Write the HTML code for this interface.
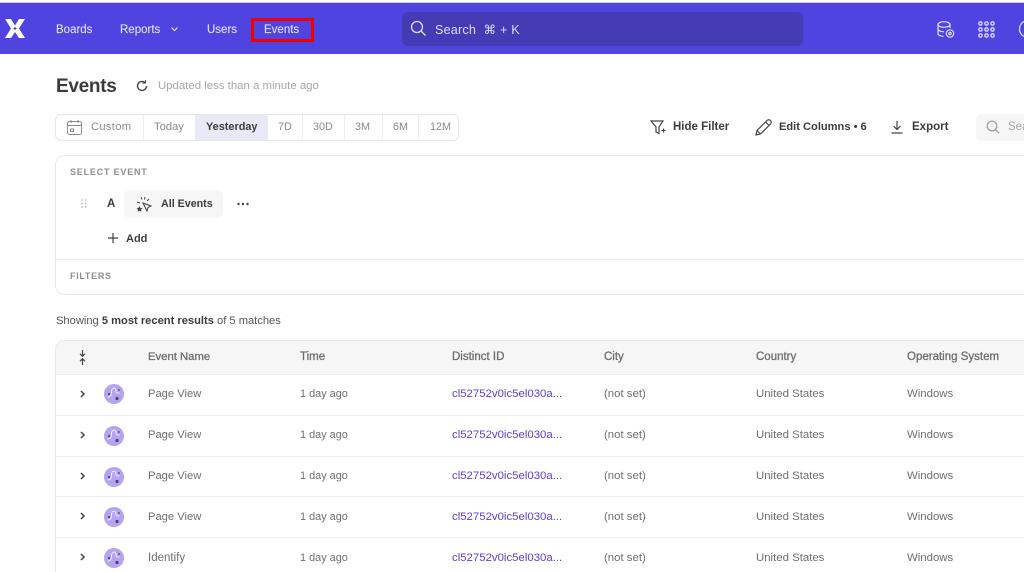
<!DOCTYPE html>
<html><head><meta charset="utf-8"><style>
html,body{margin:0;padding:0;background:#fff;width:1024px;height:572px;overflow:hidden}
body{position:relative;font-family:"Liberation Sans",sans-serif;color:#6b6b6b;filter:blur(.3px)}
.t{position:absolute;white-space:nowrap;font-size:11.5px;line-height:14px}
.a{position:absolute}
svg{position:absolute;overflow:visible}
.nav{color:#dedbf9;font-size:11.5px;-webkit-text-stroke:.15px #dedbf9}
.d{color:#8a8a8a;font-size:11.2px}
.b{color:#3d3d3d;font-size:11.5px;font-weight:bold}
.h{color:#6e6e6e;font-size:11.5px;-webkit-text-stroke:.3px #6e6e6e}
.c{color:#6f6f6f;font-size:11.4px}
.n{font-size:11.2px}
.y{font-size:10.900px}
.l{color:#5b3fd6}
.line{position:absolute;background:#ececec}
</style></head><body>
<div class="a" style="left:0;top:2px;width:1024px;height:1px;background:#ccc"></div>
<div class="a" style="left:0;top:3px;width:1024px;height:51px;background:#4f44e0"></div>
<svg style="left:5px;top:19px" width="20" height="20" viewBox="0 0 20 20"><path fill="#fff" d="M0 0h6L10 6.500 14 0h6l-6 9.500 6 9.500h-6L10 13 6 19H0l6-9.500z"/><path fill="#4f44e0" d="M10 8l2 1.500-2 1.500-2-1.500z"/></svg>
<div class="t nav" style="left:56px;top:23px">Boards</div>
<div class="t nav" style="left:120px;top:23px">Reports</div>
<svg style="left:170px;top:26px" width="9" height="6"><path d="M1.500 1.500L4.500 4.500 7.500 1.500" fill="none" stroke="#dedbf9" stroke-width="1.200"/></svg>
<div class="t nav" style="left:207px;top:23px">Users</div>
<div class="t nav" style="left:264px;top:23px">Events</div>
<div class="a" style="left:251px;top:18px;width:63px;height:24px;border:3px solid #f00000;box-sizing:border-box"></div>
<div class="a" style="left:402px;top:12px;width:401px;height:34px;background:#453bb5;border-radius:6px"></div>
<svg style="left:410px;top:20px" width="18" height="18"><circle cx="7" cy="7" r="5.500" fill="none" stroke="#dedbf9" stroke-width="1.300"/><path d="M11 11l4.500 4.500" stroke="#dedbf9" stroke-width="1.300"/></svg>
<div class="t" style="left:435px;top:23px;color:#dedbf9;font-size:12.600px;letter-spacing:.2px;font-family:'Liberation Sans','DejaVu Sans',sans-serif">Search &nbsp;⌘ + K</div>
<svg style="left:937px;top:21px" width="18" height="18" fill="none" stroke="#e2e0fa" stroke-width="1.200"><ellipse cx="7" cy="3.500" rx="6" ry="2.800"/><path d="M1 3.500v9c0 1.500 2.500 2.800 5.500 2.800M13 3.500v3.500M1 8c0 1.500 2.500 2.800 6 2.800"/><circle cx="13" cy="12.500" r="3.700"/><circle cx="13" cy="12.500" r="1.200"/></svg>
<svg style="left:978px;top:21px" width="17" height="17" fill="none" stroke="#e2e0fa" stroke-width="1.300"><circle cx="2.500" cy="2.500" r="1.700"/><circle cx="8.500" cy="2.500" r="1.700"/><circle cx="14.500" cy="2.500" r="1.700"/><circle cx="2.500" cy="8.500" r="1.700"/><circle cx="8.500" cy="8.500" r="1.700"/><circle cx="14.500" cy="8.500" r="1.700"/><circle cx="2.500" cy="14.500" r="1.700"/><circle cx="8.500" cy="14.500" r="1.700"/><circle cx="14.500" cy="14.500" r="1.700"/></svg>
<svg style="left:1018px;top:20px" width="20" height="20"><circle cx="10" cy="9" r="8.500" fill="none" stroke="#e2e0fa" stroke-width="1.200"/></svg>

<div class="t" style="left:56px;top:75px;font-size:19px;line-height:24px;font-weight:bold;letter-spacing:-.3px;color:#3a3a3a">Events</div>
<svg style="left:135px;top:79px" width="14" height="14" fill="none" stroke="#444" stroke-width="1.400"><path d="M11.500 7a4.500 4.500 0 1 1-1.500-3.400"/><path d="M10.500 1v3h-3" stroke-width="1.100"/></svg>
<div class="t" style="left:158px;top:79px;color:#a6a6a6;font-size:11.400px">Updated less than a minute ago</div>

<div class="a" style="left:55px;top:114px;width:404px;height:27px;border:1px solid #e8e8e8;border-radius:6px;box-sizing:border-box"></div>
<div class="a" style="left:195px;top:115px;width:73px;height:25px;background:#e9e8f6"></div>
<div class="line" style="left:143px;top:115px;width:1px;height:25px"></div>
<div class="line" style="left:302px;top:115px;width:1px;height:25px"></div>
<div class="line" style="left:344px;top:115px;width:1px;height:25px"></div>
<div class="line" style="left:382px;top:115px;width:1px;height:25px"></div>
<div class="line" style="left:418px;top:115px;width:1px;height:25px"></div>
<svg style="left:67px;top:120px" width="15" height="15" fill="none" stroke="#8c8c8c" stroke-width="1"><rect x=".5" y="1.500" width="14" height="13" rx="2"/><path d="M.5 5.500h14M4 0v3M11 0v3"/><rect x="3.500" y="9" width="3" height="2.500"/></svg>
<div class="t d" style="left:91px;top:120px;letter-spacing:.3px">Custom</div>
<div class="t d" style="left:154px;top:120px">Today</div>
<div class="t b" style="left:206px;top:120px;font-size:10.900px">Yesterday</div>
<div class="t d" style="left:278px;top:120px;font-size:10.800px">7D</div>
<div class="t d" style="left:313px;top:120px;font-size:10.800px">30D</div>
<div class="t d" style="left:355px;top:120px;font-size:10.800px">3M</div>
<div class="t d" style="left:393px;top:120px;font-size:10.800px">6M</div>
<div class="t d" style="left:430px;top:120px;font-size:10.800px">12M</div>

<svg style="left:650px;top:120px" width="17" height="15" fill="none" stroke="#444" stroke-width="1.200"><path d="M1 1h12L9 7v6.500L6 12V7z"/><path d="M11.500 10.500h4M13.500 8.500v4"/></svg>
<div class="t b" style="left:673px;top:120px">Hide Filter</div>
<svg style="left:755px;top:119px" width="17" height="17" fill="none" stroke="#444" stroke-width="1.200"><path d="M1 16l1-4.500L12 1.500a1.500 1.500 0 0 1 3.500 3.500L5.500 15z"/><path d="M2 11.500L5.500 15M10.500 3l3.500 3.500"/></svg>
<div class="t b" style="left:779px;top:120px;font-size:11.100px">Edit Columns • 6</div>
<svg style="left:890px;top:120px" width="14" height="15" fill="none" stroke="#444" stroke-width="1.200"><path d="M7 1v8M3.500 6L7 9.500 10.500 6M1.500 13h11"/></svg>
<div class="t b" style="left:912px;top:120px">Export</div>
<div class="a" style="left:976px;top:114px;width:60px;height:27px;background:#f6f6f6;border-radius:6px"></div>
<svg style="left:986px;top:120px" width="14" height="14" fill="none" stroke="#999" stroke-width="1.200"><circle cx="6" cy="6" r="4.800"/><path d="M9.500 9.500l3.500 3.500"/></svg>
<div class="t" style="left:1008px;top:120px;color:#a6a6a6">Search</div>

<div class="a" style="left:55px;top:155px;width:1000px;height:140px;border:1px solid #e8e8e8;border-radius:10px;box-sizing:border-box"></div>
<div class="line" style="left:56px;top:259px;width:968px;height:1px"></div>
<div class="t" style="left:70px;top:165px;font-size:9px;font-weight:bold;letter-spacing:.8px;color:#8f8f8f">SELECT EVENT</div>
<svg style="left:81px;top:199px" width="6" height="10" fill="#aaa"><circle cx="1" cy="1" r=".8"/><circle cx="4.500" cy="1" r=".8"/><circle cx="1" cy="4.500" r=".8"/><circle cx="4.500" cy="4.500" r=".8"/><circle cx="1" cy="8" r=".8"/><circle cx="4.500" cy="8" r=".8"/></svg>
<div class="t b" style="left:107px;top:197px">A</div>
<div class="a" style="left:124px;top:190px;width:99px;height:28px;background:#f6f6f6;border-radius:6px"></div>
<svg style="left:136px;top:196px" width="16" height="17" fill="none" stroke="#444" stroke-width="1"><path d="M7 7l8 3-3 1.500-1 3.500z"/><path d="M5 1l1 2.500M9 1L8.500 3.500M13 3l-2 2M1 6l3 1" /><path d="M3.500 10l1 2 2 .3-1.500 1.400.4 2.100-1.900-1-1.900 1 .4-2.100L.5 12.300l2-.3z" fill="#444" stroke="none"/></svg>
<div class="t b" style="left:161px;top:197px;font-size:10.700px">All Events</div>
<svg style="left:237px;top:202px" width="12" height="4" fill="#444"><circle cx="1.500" cy="2" r="1.200"/><circle cx="6" cy="2" r="1.200"/><circle cx="10.500" cy="2" r="1.200"/></svg>
<svg style="left:108px;top:233px" width="10" height="10" stroke="#444" stroke-width="1.200"><path d="M5 0v10M0 5h10"/></svg>
<div class="t b" style="left:126px;top:232px;font-size:11px">Add</div>
<div class="t" style="left:70px;top:269px;font-size:9px;font-weight:bold;letter-spacing:.7px;color:#8f8f8f">FILTERS</div>

<div class="t" style="left:56px;top:314px;color:#555;font-size:11.150px">Showing <b style="color:#3d3d3d">5 most recent results</b> of 5 matches</div>

<div class="a" style="left:55px;top:340px;width:1000px;height:250px;border:1px solid #e8e8e8;border-radius:10px 10px 0 0;box-sizing:border-box"></div>
<div class="a" style="left:56px;top:341px;width:968px;height:33px;background:#f6f6f6;border-radius:9px 0 0 0"></div>
<div class="line" style="left:56px;top:374px;width:968px;height:1px"></div>
<div class="line" style="left:56px;top:415px;width:968px;height:1px"></div>
<div class="line" style="left:56px;top:456px;width:968px;height:1px"></div>
<div class="line" style="left:56px;top:496px;width:968px;height:1px"></div>
<div class="line" style="left:56px;top:537px;width:968px;height:1px"></div>
<svg style="left:78px;top:350px" width="9" height="15" fill="none" stroke="#444" stroke-width="1.200"><path d="M4.500 0v6M2 3.800L4.500 6.300 7 3.800M4.500 9v6M2 11.200L4.500 8.700 7 11.200"/></svg>
<div class="t h" style="left:148px;top:350px;font-size:11.300px">Event Name</div>
<div class="t h" style="left:300px;top:350px">Time</div>
<div class="t h" style="left:452px;top:350px">Distinct ID</div>
<div class="t h" style="left:604px;top:350px">City</div>
<div class="t h" style="left:756px;top:350px">Country</div>
<div class="t h" style="left:907px;top:350px">Operating System</div>

<svg width="0" height="0" style="left:0;top:0"><defs><g id="ic"><circle cx="10" cy="10" r="10" fill="#b5a3ef"/><path d="M3.500 13C6.500 13 7.500 11.500 7.500 8.500S8 4 10 4 12 6 12 7.500s1 1.500 3.500 1.500" fill="none" stroke="#f0ecfe" stroke-width="1"/><circle cx="5" cy="10" r="1.100" fill="#4d4270"/><circle cx="13" cy="14.500" r="1.600" fill="#4d4270"/><circle cx="15" cy="6" r=".9" fill="#4d4270"/></g><path id="ch" d="M1 1l3 3-3 3" fill="none" stroke="#444" stroke-width="1.500"/></defs></svg>

<svg style="left:80px;top:390px" width="6" height="8"><use href="#ch"/></svg>
<svg style="left:104px;top:384px" width="20" height="20"><use href="#ic"/></svg>
<div class="t c n" style="left:148px;top:387px">Page View</div><div class="t c y" style="left:300px;top:387px">1 day ago</div><div class="t c l" style="left:452px;top:387px">cl52752v0ic5el030a...</div><div class="t c" style="left:604px;top:387px">(not set)</div><div class="t c" style="left:756px;top:387px">United States</div><div class="t c" style="left:907px;top:387px">Windows</div>

<svg style="left:80px;top:431px" width="6" height="8"><use href="#ch"/></svg>
<svg style="left:104px;top:426px" width="20" height="20"><use href="#ic"/></svg>
<div class="t c n" style="left:148px;top:428px">Page View</div><div class="t c y" style="left:300px;top:428px">1 day ago</div><div class="t c l" style="left:452px;top:428px">cl52752v0ic5el030a...</div><div class="t c" style="left:604px;top:428px">(not set)</div><div class="t c" style="left:756px;top:428px">United States</div><div class="t c" style="left:907px;top:428px">Windows</div>

<svg style="left:80px;top:472px" width="6" height="8"><use href="#ch"/></svg>
<svg style="left:104px;top:467px" width="20" height="20"><use href="#ic"/></svg>
<div class="t c n" style="left:148px;top:469px">Page View</div><div class="t c y" style="left:300px;top:469px">1 day ago</div><div class="t c l" style="left:452px;top:469px">cl52752v0ic5el030a...</div><div class="t c" style="left:604px;top:469px">(not set)</div><div class="t c" style="left:756px;top:469px">United States</div><div class="t c" style="left:907px;top:469px">Windows</div>

<svg style="left:80px;top:512px" width="6" height="8"><use href="#ch"/></svg>
<svg style="left:104px;top:507px" width="20" height="20"><use href="#ic"/></svg>
<div class="t c n" style="left:148px;top:510px">Page View</div><div class="t c y" style="left:300px;top:510px">1 day ago</div><div class="t c l" style="left:452px;top:510px">cl52752v0ic5el030a...</div><div class="t c" style="left:604px;top:510px">(not set)</div><div class="t c" style="left:756px;top:510px">United States</div><div class="t c" style="left:907px;top:510px">Windows</div>

<svg style="left:80px;top:553px" width="6" height="8"><use href="#ch"/></svg>
<svg style="left:104px;top:548px" width="20" height="20"><use href="#ic"/></svg>
<div class="t c n" style="left:148px;top:551px;font-size:11.500px">Identify</div><div class="t c y" style="left:300px;top:551px">1 day ago</div><div class="t c l" style="left:452px;top:551px">cl52752v0ic5el030a...</div><div class="t c" style="left:604px;top:551px">(not set)</div><div class="t c" style="left:756px;top:551px">United States</div><div class="t c" style="left:907px;top:551px">Windows</div>
</body></html>
